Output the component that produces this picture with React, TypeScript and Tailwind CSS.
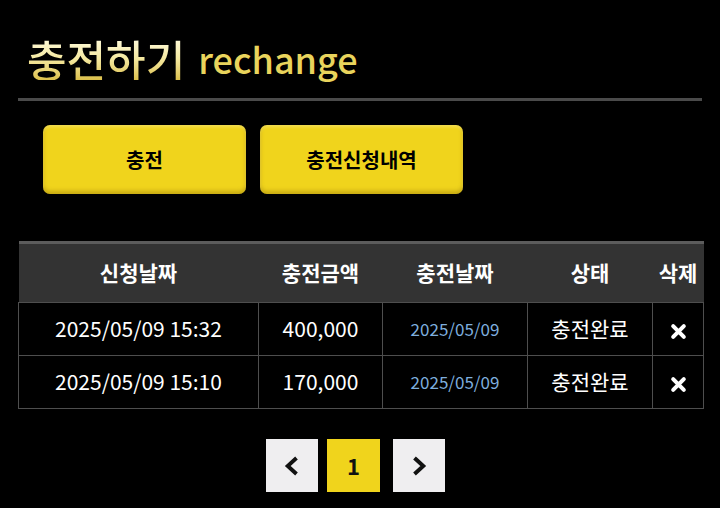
import React from "react";

const rows = [
  { applied: "2025/05/09 15:32", amount: "400,000", charged: "2025/05/09", status: "충전완료" },
  { applied: "2025/05/09 15:10", amount: "170,000", charged: "2025/05/09", status: "충전완료" },
];

const font = { fontFamily: '"Noto Sans CJK KR", "Noto Sans", sans-serif' };

function Cross() {
  return (
    <svg width="17" height="17" viewBox="0 0 16 16" className="inline-block">
      <path d="M3 3 L13 13 M13 3 L3 13" stroke="#fff" strokeWidth="3.8" strokeLinecap="round" />
    </svg>
  );
}

function Chevron({ dir }: { dir: "left" | "right" }) {
  return (
    <svg width="22" height="22" viewBox="0 0 18 18">
      {dir === "left" ? (
        <path d="M11.5 3.5 L5.5 9 L11.5 14.5" fill="none" stroke="#111" strokeWidth="3.2" strokeLinecap="square" />
      ) : (
        <path d="M6.5 3.5 L12.5 9 L6.5 14.5" fill="none" stroke="#111" strokeWidth="3.2" strokeLinecap="square" />
      )}
    </svg>
  );
}

export default function App() {
  return (
    <div className="w-[720px] h-[508px] bg-black overflow-hidden" style={font}>
      <div className="px-[18px] pt-[32px]">
        <h1 className="h-[52px] flex items-center pl-[9px] leading-none font-medium">
          <span className="text-[43px] bg-gradient-to-b from-[#fffbe0] via-[#f5e9a0] to-[#dcc04a] bg-clip-text text-transparent">
            충전하기
          </span>
          <span className="ml-[13px] text-[36px] text-[#e9d45c]">rechange</span>
        </h1>
        <div className="mt-[14px] h-[3px] bg-[#4a4a4a]" />

        <div className="mt-[24px] ml-[25px] flex gap-[14px]">
          <button className="w-[203px] h-[69px] rounded-[7px] bg-[#f0d41c] text-black text-[20px] font-bold shadow-[inset_0_-3px_4px_rgba(120,90,0,0.35),inset_0_2px_3px_rgba(255,255,255,0.25)]">
            충전
          </button>
          <button className="w-[203px] h-[69px] rounded-[7px] bg-[#f0d41c] text-black text-[20px] font-bold shadow-[inset_0_-3px_4px_rgba(120,90,0,0.35),inset_0_2px_3px_rgba(255,255,255,0.25)]">
            충전신청내역
          </button>
        </div>

        <table className="mt-[47px] w-[685px] table-fixed border-collapse text-white">
          <colgroup>
            <col className="w-[240px]" />
            <col className="w-[124px]" />
            <col className="w-[145px]" />
            <col className="w-[125px]" />
            <col className="w-[51px]" />
          </colgroup>
          <thead>
            <tr className="bg-[#333333] border-t-[3px] border-[#5c5c5c] h-[60px]">
              <th className="text-[21px] font-bold">신청날짜</th>
              <th className="text-[21px] font-bold">충전금액</th>
              <th className="text-[21px] font-bold">충전날짜</th>
              <th className="text-[21px] font-bold">상태</th>
              <th className="text-[21px] font-bold">삭제</th>
            </tr>
          </thead>
          <tbody>
            {rows.map((r, i) => (
              <tr key={i} className="h-[53px]">
                <td className="border border-[#4e4e4e] text-center text-[21px]">{r.applied}</td>
                <td className="border border-[#4e4e4e] text-center text-[21px]">{r.amount}</td>
                <td className="border border-[#4e4e4e] text-center text-[17px] text-[#7eaede]">{r.charged}</td>
                <td className="border border-[#4e4e4e] text-center text-[21px]">{r.status}</td>
                <td className="border border-[#4e4e4e] text-center">
                  <Cross />
                </td>
              </tr>
            ))}
          </tbody>
        </table>

        <div className="mt-[30px] flex justify-center pr-[9px]">
          <button className="w-[52px] h-[53px] bg-[#efeef0] flex items-center justify-center">
            <Chevron dir="left" />
          </button>
          <button className="ml-[9px] w-[53px] h-[53px] bg-[#f0d41c] flex items-center justify-center text-[22px] font-bold text-[#111]">
            1
          </button>
          <button className="ml-[13px] w-[52px] h-[53px] bg-[#efeef0] flex items-center justify-center">
            <Chevron dir="right" />
          </button>
        </div>
      </div>
    </div>
  );
}
